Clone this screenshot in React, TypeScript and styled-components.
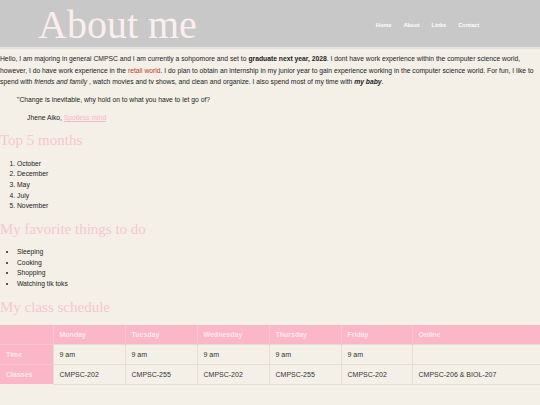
import React from 'react';
import styled, { createGlobalStyle } from 'styled-components';

const GlobalStyle = createGlobalStyle`
  html, body {
    margin: 0;
    padding: 0;
    background: #f4f0e8;
  }
  body {
    font-family: "Liberation Sans", Arial, sans-serif;
    color: #222;
  }
`;

const Header = styled.header`
  height: 47px;
  background: #c8c8c8;
  border-bottom: 2px solid #e6e2e2;
  display: flex;
  align-items: center;
  justify-content: space-between;
  padding: 0 61px 0 38px;
`;

const Title = styled.h1`
  margin: 0;
  font-family: "Liberation Serif", "Times New Roman", serif;
  font-weight: normal;
  font-size: 40px;
  color: #fbeeee;
  line-height: 1;
  padding-top: 2px;
`;

const Nav = styled.nav`
  display: flex;
  gap: 12px;
  padding-top: 2px;
`;

const NavLink = styled.a`
  color: #fff;
  font-size: 5.6px;
  font-weight: bold;
  text-decoration: none;
`;

const Main = styled.main`
  font-size: 6.75px;
  line-height: 11.5px;
`;

const Intro = styled.p`
  margin: 4px 0 0;
`;

const Red = styled.span`
  color: #c0392b;
`;

const Quote = styled.blockquote`
  margin: 6px 0 0 17px;
`;

const Cite = styled.p`
  margin: 7px 0 0 27px;
`;

const PinkLink = styled.a`
  color: #f7b7c7;
  text-decoration: underline;
`;

const SectionTitle = styled.h2<{ $gap?: number }>`
  margin: ${p => p.$gap ?? 8}px 0 0;
  font-family: "Liberation Serif", "Times New Roman", serif;
  font-weight: normal;
  font-size: 15px;
  line-height: 18px;
  color: #f8c6d0;
`;

const List = styled.ol`
  margin: 10px 0 0;
  padding-left: 17px;
  line-height: 10.7px;
`;

const BulletList = styled.ul`
  margin: 9px 0 0;
  padding-left: 17px;
  line-height: 10.7px;
`;

const Table = styled.table`
  margin-top: 9px;
  width: 540px;
  border-collapse: collapse;
  table-layout: fixed;
  font-size: 7px;
`;

const Head = styled.th`
  background: #fbb6c8;
  color: #fbe9ee;
  font-weight: bold;
  text-align: left;
  height: 19px;
  padding: 0 6px;
  border-right: 1px solid #f9c4d2;
`;

const RowHead = styled.th`
  background: #fbb6c8;
  color: #fbe9ee;
  font-weight: bold;
  text-align: left;
  height: 19px;
  padding: 0 6px;
  border-top: 1px solid #f9c4d2;
`;

const Cell = styled.td`
  height: 19px;
  padding: 0 6px;
  border: 1px solid #e2ded6;
  color: #333;
`;

const cols = [53, 72, 72, 72, 72, 71, 128];
const days = ['Monday', 'Tuesday', 'Wednesday', 'Thursday', 'Friday', 'Online'];
const times = ['9 am', '9 am', '9 am', '9 am', '9 am', ''];
const classes = ['CMPSC-202', 'CMPSC-255', 'CMPSC-202', 'CMPSC-255', 'CMPSC-202', 'CMPSC-206 & BIOL-207'];

export default function App() {
  return (
    <>
      <GlobalStyle />
      <Header>
        <Title>About me</Title>
        <Nav>
          <NavLink href="#">Home</NavLink>
          <NavLink href="#">About</NavLink>
          <NavLink href="#">Links</NavLink>
          <NavLink href="#">Contact</NavLink>
        </Nav>
      </Header>
      <Main>
        <Intro>
          Hello, I am majoring in general CMPSC and I am currently a sohpomore and set to <b>graduate next year, 2028</b>. I dont have work experience within the computer science world, however, I do have work experience in the <Red>retail world</Red>. I do plan to obtain an internship in my junior year to gain experience working in the computer science world. For fun, I like to spend with <i>friends and family</i> , watch movies and tv shows, and clean and organize. I also spend most of my time with <b><i>my baby</i></b>.
        </Intro>
        <Quote>"Change is inevitable, why hold on to what you have to let go of?</Quote>
        <Cite>
          Jhene Aiko, <PinkLink href="#">Spotless mind</PinkLink>
        </Cite>
        <SectionTitle $gap={7}>Top 5 months</SectionTitle>
        <List>
          <li>October</li>
          <li>December</li>
          <li>May</li>
          <li>July</li>
          <li>November</li>
        </List>
        <SectionTitle>My favorite things to do</SectionTitle>
        <BulletList>
          <li>Sleeping</li>
          <li>Cooking</li>
          <li>Shopping</li>
          <li>Watching tik toks</li>
        </BulletList>
        <SectionTitle>My class schedule</SectionTitle>
        <Table>
          <colgroup>
            {cols.map((w, i) => (
              <col key={i} style={{ width: w }} />
            ))}
          </colgroup>
          <thead>
            <tr>
              <Head />
              {days.map(d => (
                <Head key={d}>{d}</Head>
              ))}
            </tr>
          </thead>
          <tbody>
            <tr>
              <RowHead>Time</RowHead>
              {times.map((t, i) => (
                <Cell key={i}>{t}</Cell>
              ))}
            </tr>
            <tr>
              <RowHead>Classes</RowHead>
              {classes.map((c, i) => (
                <Cell key={i}>{c}</Cell>
              ))}
            </tr>
          </tbody>
        </Table>
      </Main>
    </>
  );
}
